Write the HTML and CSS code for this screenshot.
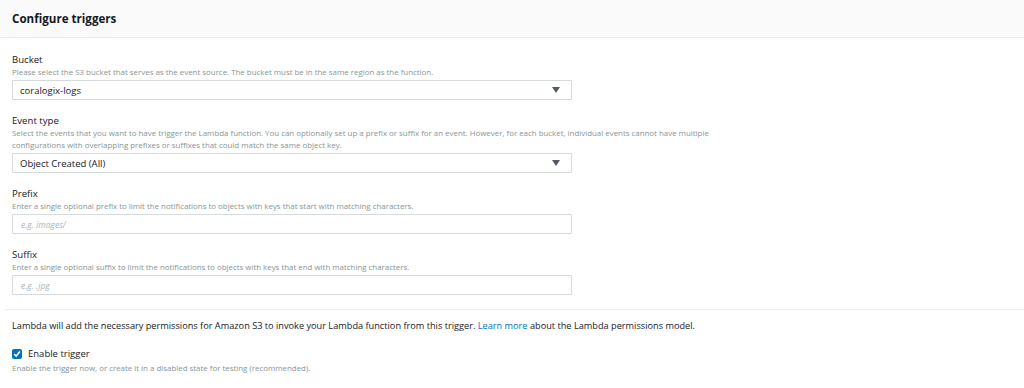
FILE: index.html
```html
<!DOCTYPE html>
<html lang="en">
<head>
  <meta charset="UTF-8">
  <title>Configure triggers</title>
  <link rel="stylesheet" href="styles.css">
</head>
<body>

  <!-- Panel header -->
  <header class="panel-header">
    <h2>Configure triggers</h2>
  </header>

  <div class="panel-body">

    <!-- Bucket -->
    <div class="field">
      <label class="field-label">Bucket</label>
      <p class="field-help">Please select the S3 bucket that serves as the event source. The bucket must be in the same region as the function.</p>
      <div class="select-box">
        <span>coralogix-logs</span>
        <span class="caret"></span>
      </div>
    </div>

    <!-- Event type -->
    <div class="field">
      <label class="field-label">Event type</label>
      <p class="field-help">Select the events that you want to have trigger the Lambda function. You can optionally set up a prefix or suffix for an event. However, for each bucket, individual events cannot have multiple configurations with overlapping prefixes or suffixes that could match the same object key.</p>
      <div class="select-box">
        <span>Object Created (All)</span>
        <span class="caret"></span>
      </div>
    </div>

    <!-- Prefix -->
    <div class="field">
      <label class="field-label">Prefix</label>
      <p class="field-help">Enter a single optional prefix to limit the notifications to objects with keys that start with matching characters.</p>
      <input class="text-input" type="text" placeholder="e.g. images/">
    </div>

    <!-- Suffix -->
    <div class="field">
      <label class="field-label">Suffix</label>
      <p class="field-help">Enter a single optional suffix to limit the notifications to objects with keys that end with matching characters.</p>
      <input class="text-input" type="text" placeholder="e.g. .jpg">
    </div>
  </div>

  <div class="panel-footer">
    <p class="permissions">Lambda will add the necessary permissions for Amazon S3 to invoke your Lambda function from this trigger. <a href="#">Learn more</a> about the Lambda permissions model.</p>

    <label class="checkbox-row">
      <span class="checkbox">
        <svg width="8" height="8" viewBox="0 0 8 8"><path d="M1.2 4.2 L3.2 6.1 L6.9 1.6" fill="none" stroke="#fff" stroke-width="1.6"/></svg>
      </span>
      <span>Enable trigger</span>
    </label>
    <p class="field-help">Enable the trigger now, or create it in a disabled state for testing (recommended).</p>
  </div>

</body>
</html>
```

FILE: styles.css
```css
/* General */
body {
  margin: 0;
  font-family: 'Open Sans', 'Liberation Sans', sans-serif;
  color: #16191f;
  background: #fff;
}

p {
  margin: 0;
}

/* Header */
.panel-header {
  background: #fafafa;
  border-bottom: 1px solid #eaeded;
  height: 37px;
  display: flex;
  align-items: center;
  padding: 0 12px;
}

.panel-header h2 {
  margin: 0;
  font-size: 11.6px;
  font-weight: 700;
}

/* Body fields */
.panel-body {
  padding: 16px 12px 14px 7px;
  margin-left: 5px;
  border-bottom: 1px solid #eaeded;
}

.field {
  margin-bottom: 15px;
}

.field:last-child {
  margin-bottom: 0;
}

.field-label {
  display: block;
  font-size: 9.6px;
  line-height: 12px;
  color: #16191f;
}

.field-help {
  font-size: 7.9px;
  line-height: 12px;
  color: #879596;
  max-width: 710px;
}

.select-box,
.text-input {
  box-sizing: border-box;
  width: 560px;
  height: 20px;
  margin-top: 2px;
  border: 1px solid #d5dbdb;
  border-radius: 1px;
  background: #fff;
}

.select-box {
  display: flex;
  align-items: center;
  justify-content: space-between;
  padding: 0 11px 0 7px;
  font-size: 9.5px;
  color: #16191f;
}

.caret {
  width: 0;
  height: 0;
  border-left: 4px solid transparent;
  border-right: 4px solid transparent;
  border-top: 6px solid #545b64;
}

.text-input {
  display: block;
  padding: 0 8px;
  font-family: inherit;
  font-size: 8.5px;
  outline: none;
}

.text-input::placeholder {
  color: #aab7b8;
  font-style: italic;
}

/* Footer */
.panel-footer {
  padding: 9px 12px 0;
}

.permissions {
  font-size: 9.2px;
  line-height: 14px;
  color: #16191f;
}

.permissions a {
  color: #0073bb;
  text-decoration: none;
}

.checkbox-row {
  display: flex;
  align-items: center;
  gap: 6px;
  margin-top: 15px;
  font-size: 9.5px;
  line-height: 12px;
}

.checkbox {
  width: 10px;
  height: 10px;
  border-radius: 2px;
  background: #0073bb;
  display: flex;
  align-items: center;
  justify-content: center;
}

.checkbox-row + .field-help {
  margin-top: 2px;
}
```
